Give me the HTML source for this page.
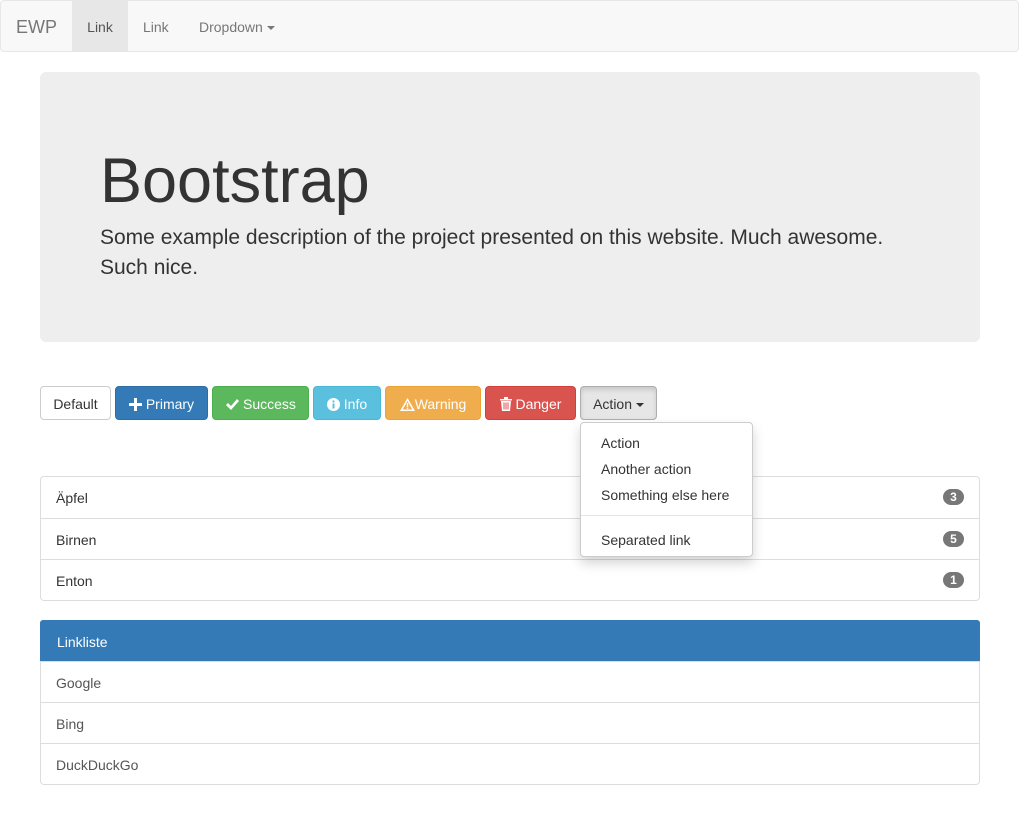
<!DOCTYPE html>
<html><head><meta charset="utf-8"><style>
*{box-sizing:border-box}
body{margin:0;font-family:"Liberation Sans",sans-serif;font-size:14px;color:#333;background:#fff;width:1019px;height:825px;overflow:hidden;position:relative}
.nav{position:absolute;left:0;top:0;width:1019px;height:52px;background:#f8f8f8;border:1px solid #e7e7e7;border-radius:4px}
.nav a{position:absolute;top:0;height:50px;line-height:52px;color:#777;text-decoration:none;font-size:14px}
.jumbo{position:absolute;left:40px;top:72px;width:940px;height:270px;background:#eee;border-radius:6px}
.jumbo h1{position:absolute;left:60px;top:74px;margin:0;font-size:63px;font-weight:400;line-height:70px}
.jumbo p{position:absolute;left:60px;top:151px;margin:0;font-size:21px;line-height:30px;width:830px}
.btn{position:absolute;top:386px;height:34px;border:1px solid;border-radius:4px;color:#fff;line-height:34px;text-align:center;font-size:14px;white-space:nowrap}
.btn svg{vertical-align:-2px}
.list{position:absolute;left:40px;width:940px;border:1px solid #ddd;border-radius:4px;background:#fff}
.item{height:41px;line-height:43px;padding-left:15px;border-top:1px solid #ddd;position:relative}
.item:first-child{border-top:0}
.badge{position:absolute;right:15px;top:12px;width:21px;height:16px;background:#777;color:#fff;border-radius:9px;font-size:12px;font-weight:bold;line-height:16px;text-align:center}
.dd{position:absolute;left:580px;top:422px;width:173px;height:135px;background:#fff;border:1px solid #ccc;border-radius:4px;box-shadow:0 6px 12px rgba(0,0,0,.175)}
.dd div{position:absolute;left:20px;font-size:14px;color:#333}
</style></head><body>
<div class="nav">
<a style="left:15px;font-size:18px">EWP</a>
<a style="left:71px;width:56px;background:#e7e7e7;color:#555;text-align:center">Link</a>
<a style="left:142px">Link</a>
<a style="left:198px">Dropdown <span style="display:inline-block;border-top:4px solid #777;border-left:4px solid transparent;border-right:4px solid transparent;vertical-align:middle"></span></a>
</div>
<div class="jumbo"><h1>Bootstrap</h1><p>Some example description of the project presented on this website. Much awesome. Such nice.</p></div>
<div class="btn" style="left:40px;width:71px;background:#fff;border-color:#ccc;color:#333">Default</div>
<div class="btn" style="left:115px;width:93px;background:#337ab7;border-color:#2e6da4"><svg width="13" height="13" viewBox="0 0 13 13"><path d="M5 0h3v5h5v3H8v5H5V8H0V5h5z" fill="#fff"/></svg> Primary</div>
<div class="btn" style="left:212px;width:97px;background:#5cb85c;border-color:#4cae4c"><svg width="14" height="13" viewBox="0 0 14 13"><path d="M1 7l2-2 3 3 6-7 2 2-8 9z" fill="#fff"/></svg> Success</div>
<div class="btn" style="left:313px;width:68px;background:#5bc0de;border-color:#46b8da"><svg width="13" height="13" viewBox="0 0 13 13"><circle cx="6.5" cy="6.5" r="6.5" fill="#fff"/><rect x="5.5" y="5.5" width="2" height="5" fill="#5bc0de"/><circle cx="6.5" cy="3.5" r="1.1" fill="#5bc0de"/></svg> Info</div>
<div class="btn" style="left:385px;width:96px;background:#f0ad4e;border-color:#eea236"><svg width="15" height="13" viewBox="0 0 15 13"><path d="M7.5 0L15 13H0z" fill="#fff"/><path d="M7.5 3L12.3 11.5H2.7z" fill="#f0ad4e"/><rect x="6.8" y="5" width="1.4" height="4" fill="#fff"/><rect x="6.8" y="9.6" width="1.4" height="1.3" fill="#fff"/></svg>Warning</div>
<div class="btn" style="left:485px;width:91px;background:#d9534f;border-color:#d43f3a"><svg width="12" height="14" viewBox="0 0 12 14"><path d="M0 2h12v1.5H0zM4 0h4v2H4zM1 4h10l-1 10H2zM3.5 5.5v7h1v-7zM5.5 5.5v7h1v-7zM7.5 5.5v7h1v-7z" fill="#fff" fill-rule="evenodd"/></svg> Danger</div>
<div class="btn" style="left:580px;width:77px;background:#e6e6e6;border-color:#adadad;color:#333;box-shadow:inset 0 3px 5px rgba(0,0,0,.125)">Action <span style="display:inline-block;border-top:4px solid #333;border-left:4px solid transparent;border-right:4px solid transparent;vertical-align:middle"></span></div>
<div class="list" style="top:476px">
<div class="item">Äpfel<span class="badge">3</span></div>
<div class="item">Birnen<span class="badge">5</span></div>
<div class="item">Enton<span class="badge">1</span></div>
</div>
<div class="list" style="top:620px;border-color:#ddd">
<div class="item" style="background:#337ab7;color:#fff;border-radius:3px 3px 0 0;margin:-1px -1px 0;border:1px solid #337ab7;padding-left:16px">Linkliste</div>
<div class="item" style="color:#555">Google</div>
<div class="item" style="color:#555">Bing</div>
<div class="item" style="color:#555">DuckDuckGo</div>
</div>
<div class="dd">
<div style="top:12px">Action</div>
<div style="top:38px">Another action</div>
<div style="top:64px">Something else here</div>
<div style="top:92px;left:0;width:171px;height:1px;background:#e5e5e5"></div>
<div style="top:109px">Separated link</div>
</div>
</body></html>
